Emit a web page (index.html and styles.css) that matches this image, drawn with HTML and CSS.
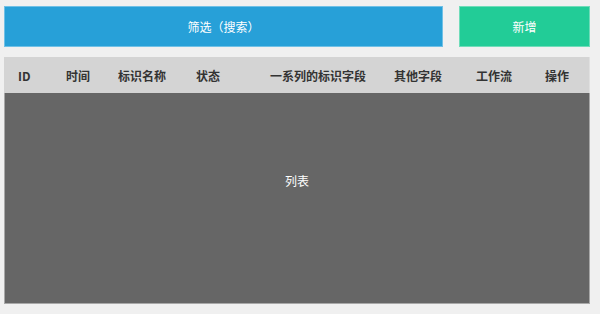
FILE: index.html
```html
<!DOCTYPE html>
<html lang="zh-CN">
<head>
    <meta charset="UTF-8">
    <meta name="viewport" content="width=device-width, initial-scale=1.0">
    <title>列表</title>
    <link rel="stylesheet" href="styles.css">
</head>
<body>

    <div class="wrap">

        <div class="toolbar">
            <div class="btn btn-search">筛选（搜索）</div>
            <div class="btn btn-add">新增</div>
        </div>

        <div class="table">
            <ul class="thead">
                <li>ID</li>
                <li>时间</li>
                <li>标识名称</li>
                <li>状态</li>
                <li>一系列的标识字段</li>
                <li>其他字段</li>
                <li>工作流</li>
                <li>操作</li>
            </ul>
            <div class="tbody">列表</div>
        </div>

    </div>

</body>
</html>
```

FILE: styles.css
```css
body, div, ul, li {
  margin: 0;
  padding: 0;
}

ul {
  list-style-type: none;
}

body {
  background: #f0f0f0;
  font: 12px/18px "Noto Sans CJK SC", "Noto Sans", sans-serif;
  color: #fff;
}

.wrap {
  width: 586px;
  padding: 6px 0 0 4px;
}

.toolbar {
  display: flex;
  gap: 16px;
  height: 41px;
}

.btn {
  display: flex;
  align-items: center;
  justify-content: center;
  box-sizing: border-box;
  cursor: pointer;
}

.btn-search {
  flex: 1;
  background: #27a0d8;
  border: 1px solid #6fc0e6;
}

.btn-add {
  width: 131px;
  background: #22cc97;
  border: 1px solid #6fdcb9;
}

.table {
  margin-top: 10px;
}

.thead {
  display: grid;
  grid-template-columns: 48px 52px 78px 74px 124px 82px 69px 1fr;
  align-items: center;
  box-sizing: border-box;
  height: 36px;
  padding: 2px 0 0 14px;
  background: #d4d4d4;
  border-right: 1px solid #e0e0e0;
  color: #333;
  font-weight: 700;
}

.tbody {
  box-sizing: border-box;
  height: 211px;
  padding-top: 79px;
  text-align: center;
  background: #666;
  border: 1px solid #a8a8a8;
  border-top: 0;
}
```
